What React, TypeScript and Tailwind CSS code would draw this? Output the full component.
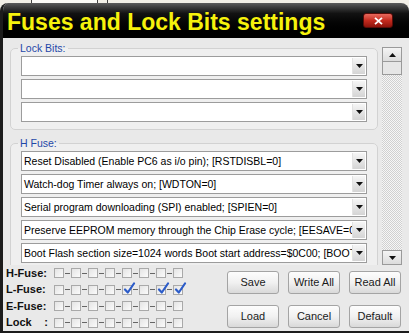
import React from "react";

const F = "font-['Liberation_Sans',Arial,sans-serif]";

function Arrow({ up = false }: { up?: boolean }) {
  return (
    <svg width="7" height="4" viewBox="0 0 7 4" className="block">
      {up ? <polygon points="0,4 7,4 3.5,0" fill="#111" /> : <polygon points="0,0 7,0 3.5,4" fill="#111" />}
    </svg>
  );
}

function Combo({ text = "" }: { text?: string }) {
  return (
    <div className="h-[20px] w-full min-w-0 flex border border-[#9c9c9c] bg-white">
      <div className="flex-1 min-w-0 overflow-hidden whitespace-nowrap pl-[2px] text-[10.5px] leading-[18px] text-black">
        {text}
      </div>
      <div className="w-[13px] shrink-0 my-[1px] mr-[1px] flex items-center justify-center bg-gradient-to-b from-[#f6f6f6] to-[#d4d4d4] border-l border-[#e2e2e2]">
        <Arrow />
      </div>
    </div>
  );
}

function Group({ title, items, className = "" }: { title: string; items: string[]; className?: string }) {
  return (
    <fieldset className={`min-w-0 w-[368px] border border-[#d2d2d2] rounded-[5px] bg-[#efefef] px-[10px] pb-[7px] ${className}`}>
      <legend className="-ml-[3px] px-[2px] text-[10.5px] leading-[13px] text-[#1f48a8]">{title}</legend>
      <div className="flex flex-col gap-[3px] pt-[1px] min-w-0">
        {items.map((t, i) => (
          <Combo key={i} text={t} />
        ))}
      </div>
    </fieldset>
  );
}

function Box({ checked = false }: { checked?: boolean }) {
  return (
    <div className="relative w-[10px] h-[10px] border border-[#a9a9a9] bg-gradient-to-br from-[#e4e4e4] to-[#fbfbfb]">
      {checked && (
        <svg width="13" height="13" viewBox="0 0 13 13" className="absolute -top-[4px] left-[0px]">
          <path d="M2 7.5 L4.8 10.5 L11 1.5" stroke="#2c5cc9" strokeWidth="2.2" fill="none" strokeLinecap="round" strokeLinejoin="round" />
        </svg>
      )}
    </div>
  );
}

function FuseRow({ label, checked = [] }: { label: React.ReactNode; checked?: number[] }) {
  return (
    <div className="h-[16.5px] flex items-center">
      <div className="w-[48px] text-[11px] font-bold text-[#111] leading-[13px]">{label}</div>
      <div className="flex items-center">
        {Array.from({ length: 8 }).map((_, i) => (
          <React.Fragment key={i}>
            {i > 0 && (
              <div className="w-[7px] flex items-center justify-center">
                <div className="w-[5px] h-[1px] bg-[#666]" />
              </div>
            )}
            <Box checked={checked.includes(i)} />
          </React.Fragment>
        ))}
      </div>
    </div>
  );
}

function Btn({ children }: { children: React.ReactNode }) {
  return (
    <div className="w-[52px] h-[23px] flex items-center justify-center border border-[#a4a4a4] rounded-[3px] bg-gradient-to-b from-[#fdfdfd] via-[#f1f1f1] to-[#d9d9d9] text-[11px] text-[#1a1a1a]">
      {children}
    </div>
  );
}

export default function App() {
  return (
    <div className={`w-[409px] h-[333px] overflow-hidden bg-[#f2efe6] ${F}`}>
      <div className="h-[3px] flex">
        <div className="w-[31px]" />
        <div className="w-[1px] bg-[#444]" />
        <div className="w-[65px] bg-[#fbfaf6]" />
        <div className="w-[1px] bg-[#444]" />
        <div className="w-[9px]" />
        <div className="w-[1px] bg-[#444]" />
      </div>
      <div className="w-[409px] h-[330px] flex flex-col rounded-t-[8px] overflow-hidden border-l-[3px] border-b-[2px] border-[#1c1c1c] bg-[#e9e9e9]">
        <div className="h-[35px] -ml-[3px] flex items-start bg-gradient-to-b from-[#5c5c5c] via-[#121212] via-30% to-[#000000]">
          <div className="pl-[7px] pt-[6px] text-[23px] leading-[26px] font-bold text-[#f6f20c] whitespace-nowrap">
            Fuses and Lock Bits settings
          </div>
          <div className="ml-auto mt-[10px] mr-[16px] w-[30px] h-[15px] rounded-[3px] border border-[#5a0c08] bg-gradient-to-b from-[#e8685c] via-[#c42a1e] to-[#8e140c] flex items-center justify-center">
            <svg width="9" height="8" viewBox="0 0 9 8">
              <path d="M1 0.8 L8 7.2 M8 0.8 L1 7.2" stroke="#fff" strokeWidth="1.8" />
            </svg>
          </div>
        </div>
        <div className="h-[227px] flex overflow-hidden">
          <div className="pl-[7px] pt-[4px] w-[375px] shrink-0 flex flex-col min-w-0">
            <Group title="Lock Bits:" items={["", "", ""]} />
            <Group
              className="mt-[7px]"
              title="H Fuse:"
              items={[
                "Reset Disabled (Enable PC6 as i/o pin); [RSTDISBL=0]",
                "Watch-dog Timer always on; [WDTON=0]",
                "Serial program downloading (SPI) enabled; [SPIEN=0]",
                "Preserve EEPROM memory through the Chip Erase cycle; [EESAVE=0]",
                "Boot Flash section size=1024 words Boot start address=$0C00; [BOOTSZ=00]",
                "Boot Reset vector Enabled; [BOOTRST=0]",
              ]}
            />
          </div>
          <div className="ml-[4px] mt-[9px] w-[20px] h-[218px] flex flex-col">
            <div className="h-[15px] border border-[#9a9a9a] bg-gradient-to-b from-[#f4f4f4] to-[#dcdcdc] flex items-center justify-center">
              <Arrow up />
            </div>
            <div className="h-[13px] border-x border-b border-[#9a9a9a] bg-[#e6e6e6]" />
            <div className="flex-1 bg-[image:repeating-conic-gradient(#d0d0d0_0%_25%,#f6f6f6_0%_50%)] bg-[length:2px_2px]" />
            <div className="h-[15px] border border-[#9a9a9a] bg-gradient-to-b from-[#f4f4f4] to-[#dcdcdc] flex items-center justify-center">
              <Arrow />
            </div>
          </div>
        </div>
        <div className="flex-1 flex">
          <div className="pl-[3px] flex flex-col">
            <FuseRow label="H-Fuse:" />
            <FuseRow label="L-Fuse:" checked={[4, 6, 7]} />
            <FuseRow label="E-Fuse:" />
            <FuseRow
              label={
                <div className="flex justify-between w-[42px]">
                  <span>Lock</span>
                  <span>:</span>
                </div>
              }
            />
          </div>
          <div className="ml-auto mr-[8px] pt-[6px] grid grid-cols-3 gap-x-[9px] gap-y-[11px] content-start">
            <Btn>Save</Btn>
            <Btn>Write All</Btn>
            <Btn>Read All</Btn>
            <Btn>Load</Btn>
            <Btn>Cancel</Btn>
            <Btn>Default</Btn>
          </div>
        </div>
      </div>
    </div>
  );
}
